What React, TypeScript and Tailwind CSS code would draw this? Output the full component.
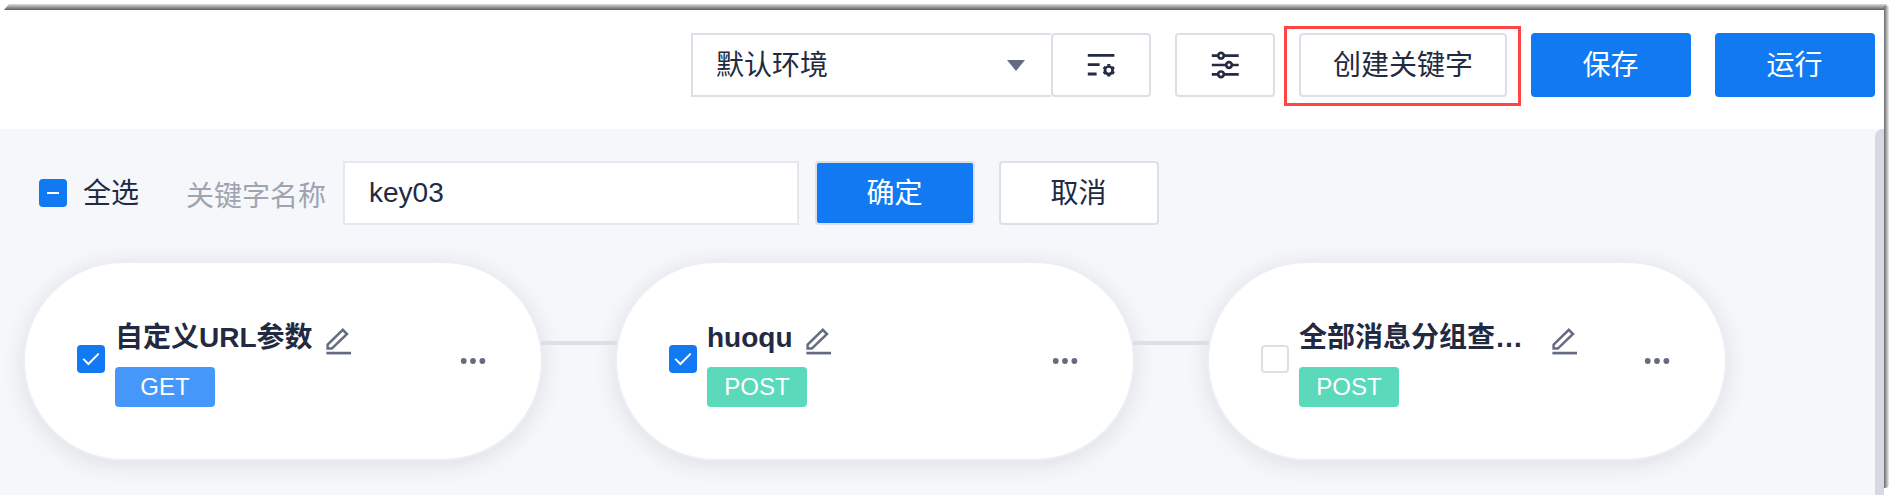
import React from "react";

type Method = "GET" | "POST";
interface Step {
  title: string;
  method: Method;
  checked: boolean;
  long?: boolean;
}

const steps: Step[] = [
  { title: "自定义URL参数", method: "GET", checked: true },
  { title: "huoqu", method: "POST", checked: true },
  { title: "全部消息分组查…", method: "POST", checked: false, long: true },
];

const outline =
  "flex h-16 shrink-0 items-center justify-center rounded-[4px] border-2 border-[#dcdfe6] bg-white";

function ListSettingsIcon() {
  return (
    <svg width="28" height="24" viewBox="0 0 28 24" fill="none" stroke="#252b41" className="block">
      <path d="M0.8 2.3H27.4M0.8 11.7H12.6M0.8 21H9.6" strokeWidth="2.8" />
      <circle cx="21.8" cy="17.3" r="3.8" strokeWidth="2.7" />
      <path
        d="M21.8 12.8v-1.8M21.8 21.8v1.8M17.9 15l-1.4-.8M25.7 15l1.4-.8M17.9 19.6l-1.4.8M25.7 19.6l1.4.8"
        strokeWidth="3"
      />
    </svg>
  );
}

function SlidersIcon() {
  return (
    <svg width="28" height="28" viewBox="0 0 28 28" fill="none" stroke="#252b41" strokeWidth="2.7" className="block">
      <path d="M0.8 4.7H7M13 4.7H27.7M0.8 14H15M21 14H27.7M0.8 23.3H7M13 23.3H27.7" />
      <circle cx="10" cy="4.7" r="2.8" />
      <circle cx="18" cy="14" r="2.8" />
      <circle cx="10" cy="23.3" r="2.8" />
    </svg>
  );
}

function EditIcon() {
  return (
    <svg width="26" height="28" viewBox="0 0 26 28" fill="none" stroke="#656b83" className="block shrink-0">
      <path d="M1.6 16.7L16.8 1.8L21 6L5.8 20.6H1.6Z" strokeWidth="2.5" />
      <path d="M0.4 25.1H25" strokeWidth="2.7" />
    </svg>
  );
}

function Checkbox({ checked }: { checked: boolean }) {
  if (!checked) {
    return <span className="block size-7 shrink-0 rounded-[4px] border-2 border-[#dcdfe6] bg-white" />;
  }
  return (
    <span className="block size-7 shrink-0 rounded-[4px] bg-[#117af2]">
      <svg width="28" height="28" viewBox="0 0 28 28" fill="none" stroke="#fff" className="block">
        <path d="M6.3 13.9L11.4 19L21.7 8.6" strokeWidth="2" />
      </svg>
    </span>
  );
}

function StepCard({ step }: { step: Step }) {
  return (
    <div className="flex h-[200px] w-[520px] shrink-0 rounded-[100px] border-2 border-[#ebeef5] bg-white pl-[52px] shadow-[0_4px_24px_0_rgba(0,0,0,0.1)]">
      <div className="mt-[82px] size-7 shrink-0">
        <Checkbox checked={step.checked} />
      </div>
      <div className="ml-[10px] w-[300px] shrink-0 pt-[57px]">
        <div className="flex h-[36px] items-center">
          <span className={"text-[28px] leading-[36px] font-bold whitespace-nowrap " + (step.long ? "w-[240px]" : "")}>
            {step.title}
          </span>
          <span className="mt-[7px] ml-[13px]">
            <EditIcon />
          </span>
        </div>
        <div
          className={
            "mt-[11px] flex h-10 w-[100px] items-center justify-center rounded-[4px] text-2xl text-white " +
            (step.method === "GET" ? "bg-[#4598fa]" : "bg-[#5ad9bb]")
          }
        >
          {step.method}
        </div>
      </div>
      <svg width="26" height="6" viewBox="0 0 26 6" fill="#656b83" className="mt-[95px] ml-[45px] block shrink-0">
        <circle cx="3.7" cy="3" r="2.9" />
        <circle cx="13" cy="3" r="2.9" />
        <circle cx="22.4" cy="3" r="2.9" />
      </svg>
    </div>
  );
}

export default function App() {
  return (
    <div className="relative flex h-[495px] w-[1894px] flex-col overflow-hidden bg-white pt-[10px] font-['Liberation_Sans','Noto_Sans_CJK_SC',sans-serif] text-[28px] text-[#222a42]">
      <div className="absolute top-1 left-[4px] h-[6px] w-[1883px] bg-linear-to-b from-[#dedede] to-[#5e5e5e] [clip-path:polygon(5px_0,100%_0,100%_100%,0_100%)]" />
      <div className="absolute top-[6px] left-[1884px] h-[482px] w-[5px] rounded-br-[4px] bg-linear-to-r from-[#6a6a6a] to-[#f0f0f0]" />

      <header className="flex h-[119px] w-[1884px] shrink-0 items-start justify-end pt-[23px] pr-[9px]">
        <div className="flex h-16 w-[360px] items-center justify-between border-2 border-r-0 border-[#dcdfe6] pr-[26px] pl-[23px]">
          <span className="pt-[2px] leading-none">默认环境</span>
          <svg width="18" height="11" viewBox="0 0 18 11" className="block">
            <path d="M0 0H18L9 11Z" fill="#656b83" />
          </svg>
        </div>
        <button className={outline + " w-[100px]"}>
          <ListSettingsIcon />
        </button>
        <button className={outline + " ml-6 w-[100px]"}>
          <SlidersIcon />
        </button>
        <div className="-mt-[7px] ml-[9px] flex h-20 w-[237px] border-3 border-[#ff4545] pt-1 pl-3">
          <button className={outline + " w-[208px] pt-[2px]"}>创建关键字</button>
        </div>
        <button className="ml-[10px] h-16 w-40 rounded-[4px] bg-[#117af2] pt-[2px] pr-px text-white">保存</button>
        <button className="ml-6 h-16 w-40 rounded-[4px] bg-[#117af2] pt-[2px] pr-px text-white">运行</button>
      </header>

      <main className="flex min-h-0 w-[1884px] flex-1 bg-[#f5f7fb]">
        <div className="flex w-[1875px] flex-col">
          <div className="mt-8 flex h-16 items-center pl-[39px]">
            <span className="flex size-7 items-center justify-center rounded-[4px] bg-[#117af2]">
              <span className="h-[2px] w-3 bg-white" />
            </span>
            <span className="ml-4 pt-[2px] leading-none">全选</span>
            <span className="mt-2 ml-[47px] leading-none text-[#9fa4b1]">关键字名称</span>
            <div className="ml-[17px] flex h-16 w-[456px] items-center border-2 border-[#e4e7ed] bg-white pl-6">
              key03
            </div>
            <button className="ml-4 h-16 w-40 rounded-[4px] border-2 border-[#dcdfe6] bg-[#117af2] pt-[2px] pr-px text-white">
              确定
            </button>
            <button className={outline + " ml-6 w-40 pt-[2px] pr-px"}>取消</button>
          </div>
          <div className="mt-9 flex pl-[23px]">
            {steps.map((step, i) => (
              <React.Fragment key={i}>
                {i > 0 && <div className="z-10 -mx-0.5 mt-20 h-1 w-[76px] shrink-0 bg-[#dcdfe6]" />}
                <StepCard step={step} />
              </React.Fragment>
            ))}
          </div>
        </div>
        <div className="w-[9px] rounded-tl-[8px] bg-[#d6d9e2]" />
      </main>
    </div>
  );
}
